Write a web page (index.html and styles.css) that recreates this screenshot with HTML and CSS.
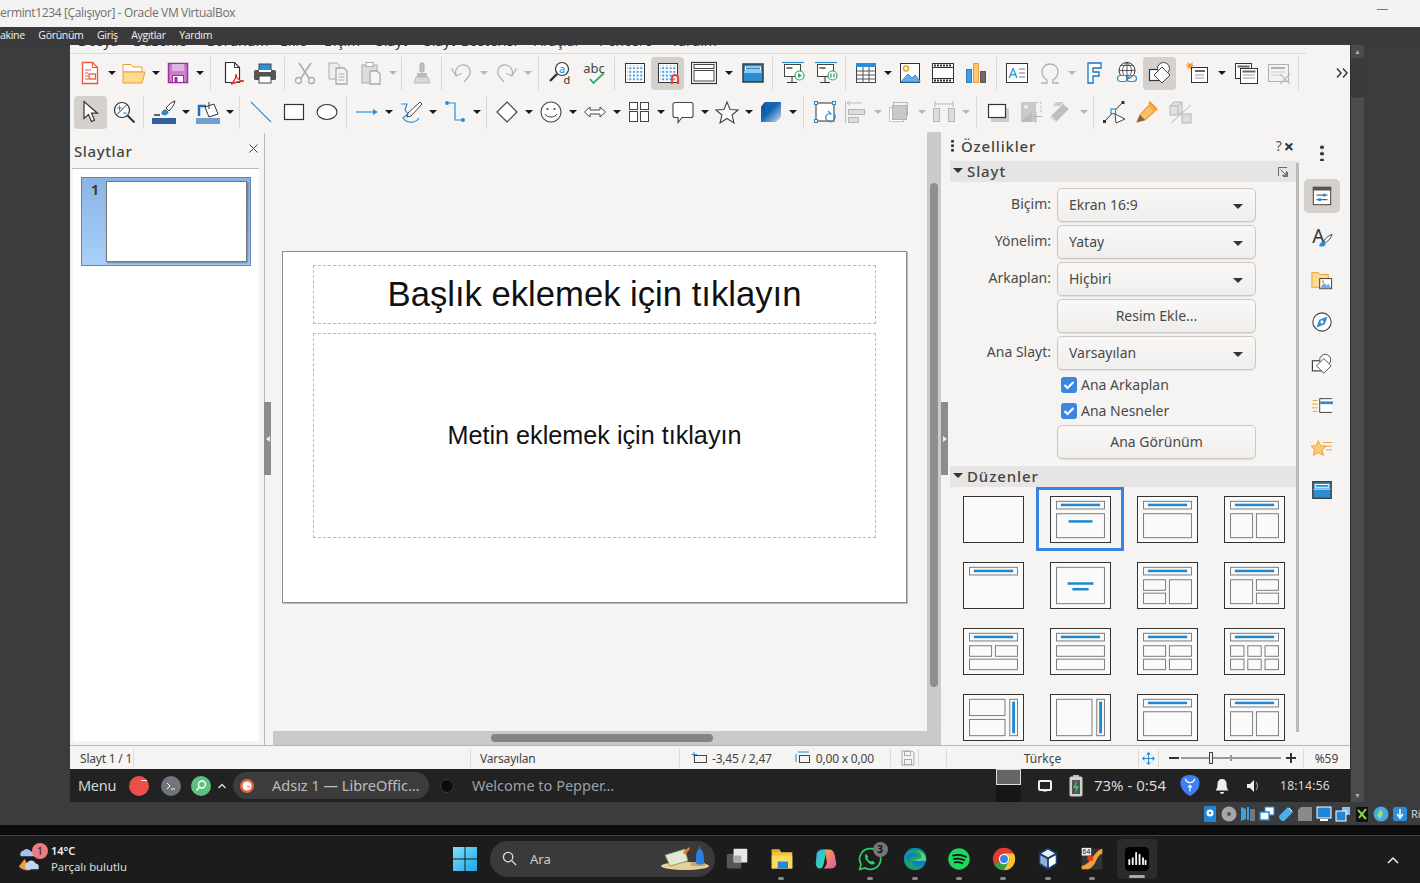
FILE: index.html
```html
<!DOCTYPE html>
<html lang="tr">
<head>
<meta charset="utf-8">
<title>VirtualBox - LibreOffice Impress</title>
<link rel="stylesheet" href="styles.css">
</head>
<body>
<svg class="defs" xmlns="http://www.w3.org/2000/svg">
<symbol id="new" viewBox="0 0 24 24"><path d="M4.500 1.500h10l5 5v16h-15z" fill="#fff" stroke="#e9573a" stroke-width="1.300"/><path d="M14.500 1.500v5h5" fill="none" stroke="#e9573a"/><path d="M7 9h6M7 12h3M7 15h3M7 18h3" stroke="#e9573a"/><rect x="11" y="13" width="6.500" height="5" fill="#fff" stroke="#e9573a" stroke-width="1.300"/></symbol>
<symbol id="open" viewBox="0 0 24 24"><path d="M1 3.500h8l2 2.500h9v5H1z" fill="#fff" stroke="#f29a33"/><path d="M1 22V11h22l-3 11z" fill="#fbdb8e" stroke="#f29a33"/></symbol>
<symbol id="save" viewBox="0 0 24 24"><rect x="2.500" y="2.500" width="19" height="19" fill="#cc7fcc" stroke="#9e2f9e" stroke-width="1.500"/><rect x="6" y="3" width="12" height="7" fill="#e0b4e0"/><rect x="6.500" y="14.500" width="11" height="7" fill="#fff" stroke="#9e2f9e"/><rect x="8.500" y="16" width="3" height="5" fill="#9e2f9e"/></symbol>
<symbol id="pdf" viewBox="0 0 24 24"><path d="M5.500 1.500h9l5 5v15h-14z" fill="#fff" stroke="#333" stroke-width="1.200"/><path d="M14.500 1.500v5h5" fill="none" stroke="#333"/><path d="M11 23c3-2 5-6 5-10 0 4 3 7 8 7-4 0-8 1-13 3z" fill="#fff" stroke="#e0302a" stroke-width="1.400"/></symbol>
<symbol id="print" viewBox="0 0 24 24"><rect x="6" y="3" width="12" height="8" fill="#2f8fd6" stroke="#444"/><rect x="1" y="9" width="22" height="10" rx="1.500" fill="#555"/><rect x="6" y="15" width="12" height="7" fill="#fff" stroke="#444"/><rect x="6" y="9" width="12" height="2" fill="#fff"/></symbol>
<symbol id="cut" viewBox="0 0 24 24"><path d="M6 2l10 15M18 2L8 17" stroke="#aaa" stroke-width="1.500" fill="none"/><circle cx="5.500" cy="19.500" r="3" fill="none" stroke="#aaa" stroke-width="1.300"/><circle cx="18.500" cy="19.500" r="3" fill="none" stroke="#aaa" stroke-width="1.300"/></symbol>
<symbol id="copy" viewBox="0 0 24 24"><path d="M3 2h8l3 3v13H3z" fill="#eee" stroke="#aaa"/><path d="M10 7h8l3 3v13H10z" fill="#f4f4f4" stroke="#aaa" stroke-width="1.300"/><path d="M12.500 13h6M12.500 16h6M12.500 19h6" stroke="#aaa"/></symbol>
<symbol id="paste" viewBox="0 0 24 24"><rect x="3" y="4" width="15" height="18" fill="#ddd" stroke="#aaa"/><rect x="7" y="1.500" width="7" height="4" fill="#fff" stroke="#aaa"/><path d="M11 10h7l3 3v10H11z" fill="#f6f6f6" stroke="#aaa" stroke-width="1.300"/></symbol>
<symbol id="clone" viewBox="0 0 24 24"><rect x="10" y="2" width="4" height="9" rx="1.500" fill="#c2c2c2" stroke="#aaa"/><path d="M7 12h10v4H7z" fill="#bbb"/><path d="M6 16h12l2 6H4z" fill="#d8d8d8" stroke="#bbb"/></symbol>
<symbol id="undo" viewBox="0 0 24 24"><path d="M6 14C4 8 9 3.500 14 4c5 .5 8 6 5 11l-5 6" fill="none" stroke="#b4b4b4" stroke-width="1.300"/><path d="M1.500 7.500L6 15l5.500-2.500" fill="none" stroke="#b4b4b4" stroke-width="1.300"/></symbol>
<symbol id="redo" viewBox="0 0 24 24"><path d="M18 14C20 8 15 3.500 10 4 5 4.500 2 10 5 15l5 6" fill="none" stroke="#b4b4b4" stroke-width="1.300"/><path d="M22.500 7.500L18 15l-5.500-2.500" fill="none" stroke="#b4b4b4" stroke-width="1.300"/></symbol>
<pattern id="dots" x="2.500" y="2.500" width="3.700" height="3.700" patternUnits="userSpaceOnUse"><rect width="2" height="2" fill="#3f9de0"/></pattern>
<symbol id="grid" viewBox="0 0 24 24"><rect x="2.500" y="2.500" width="19" height="19" fill="#fff" stroke="#333"/><rect x="4" y="4" width="17" height="17" fill="url(#dots)"/></symbol>
<symbol id="snap" viewBox="0 0 24 24"><rect x="2.500" y="2.500" width="19" height="19" fill="#fff" stroke="#333"/><rect x="4" y="4" width="17" height="17" fill="url(#dots)"/><path d="M16 23v-6a3 3 0 0 1 6 0v6" fill="none" stroke="#f04438" stroke-width="2.200"/></symbol>
<symbol id="view" viewBox="0 0 26 24"><rect x=".5" y="1.500" width="25" height="21" fill="#fff" stroke="#333" stroke-width="1.200"/><rect x="3" y="3.500" width="20" height="4" fill="#fff" stroke="#444"/><rect x="3" y="9.500" width="20" height="10.500" fill="#fff" stroke="#444"/></symbol>
<symbol id="master" viewBox="0 0 24 24"><rect x="2" y="3" width="20" height="18" fill="#2a8ed4" stroke="#3a3a3a" stroke-width="1.500"/><rect x="4.500" y="6" width="15" height="3" fill="#2a8ed4" stroke="#fff"/><path d="M3 11h18" stroke="#fff"/></symbol>
<symbol id="pres1" viewBox="0 0 24 24"><path d="M1 1.500h22" stroke="#2a8ed4" stroke-width="1.200"/><rect x="3.500" y="3.500" width="16" height="12" fill="#fff" stroke="#444"/><path d="M11 16v5M6 21.500h10" stroke="#333"/><rect x="5.500" y="6" width="6" height="2" fill="#777"/><circle cx="18.500" cy="14.500" r="4.500" fill="#fff" stroke="#2aae62" stroke-width="1.200"/><path d="M17 12v5l4-2.500z" fill="#2aae62"/></symbol>
<symbol id="pres2" viewBox="0 0 24 24"><path d="M1 1.500h22" stroke="#2a8ed4" stroke-width="1.200"/><rect x="3.500" y="3.500" width="16" height="12" fill="#fff" stroke="#444"/><path d="M11 16v5M6 21.500h10" stroke="#333"/><rect x="5.500" y="6" width="6" height="2" fill="#777"/><circle cx="18.500" cy="14.500" r="4.500" fill="#fff" stroke="#2aae62" stroke-width="1.200"/><path d="M17 12.500v4M20 12.500v4" stroke="#2aae62" stroke-width="1.300"/></symbol>
<symbol id="table" viewBox="0 0 24 24"><rect x="2.500" y="2.500" width="19" height="19" fill="#fff" stroke="#444"/><rect x="2" y="2" width="20" height="4" fill="#2a8ed4"/><path d="M2.500 10h19M2.500 14h19M2.500 18h19M9 6v16M15 6v16" stroke="#555"/></symbol>
<symbol id="image" viewBox="0 0 24 24"><rect x="2.500" y="2.500" width="19" height="19" fill="#fff" stroke="#333"/><circle cx="8" cy="7.500" r="2.500" fill="#fff" stroke="#f29a33" stroke-width="1.500"/><path d="M3 21l7-8 4 4 3-3 5 6v1H3z" fill="#6aaeea" stroke="#2a8ed4"/></symbol>
<symbol id="video" viewBox="0 0 24 24"><rect x="1.500" y="2.500" width="21" height="19" fill="#fff" stroke="#333"/><path d="M2 6.500h20M2 17.500h20" stroke="#333"/><path d="M3 4.500h18M3 19.500h18" stroke="#333" stroke-width="2" stroke-dasharray="2 1"/></symbol>
<symbol id="chart" viewBox="0 0 24 24"><rect x="2.500" y="8.500" width="5" height="13" fill="#3f9de0" stroke="#2a7ec0"/><rect x="9.500" y="2.500" width="5" height="19" fill="#f8c97a" stroke="#f29a33"/><rect x="16.500" y="10.500" width="5" height="11" fill="#6b6b6b" stroke="#555"/></symbol>
<symbol id="omega" viewBox="0 0 24 24"><path d="M3 22h6v-3c-3-2-5-5-5-8 0-5 3.500-8 8-8s8 3 8 8c0 3-2 6-5 8v3h6" fill="none" stroke="#b0b0b0" stroke-width="1.300"/></symbol>
<symbol id="fontwork" viewBox="0 0 24 24"><path d="M6 2h13v5h-8v4h6v4h-6v7H6z" fill="#fff" stroke="#1873c4" stroke-width="1.300"/></symbol>
<symbol id="link" viewBox="0 0 24 24"><circle cx="12" cy="9.500" r="8" fill="#fff" stroke="#333"/><path d="M4 9.500h16M12 1.500v16M6 4.500h12M6 14.500h12M12 1.500c-6 5-6 11 0 16M12 1.500c6 5 6 11 0 16" fill="none" stroke="#333" stroke-width=".8"/><rect x="2.500" y="14.500" width="10" height="6" rx="3" fill="#fff" stroke="#2a8ed4" stroke-width="1.200"/><rect x="11.500" y="14.500" width="10" height="6" rx="3" fill="none" stroke="#2a8ed4" stroke-width="1.200"/></symbol>
<symbol id="shapes" viewBox="0 0 24 24"><rect x="1.500" y="8.500" width="13" height="11" fill="#fff" stroke="#333" stroke-width="1.200"/><circle cx="15.500" cy="7.500" r="6" fill="#fff" stroke="#444"/><path d="M14 6l8 8-8 8-8-8z" fill="#fff" stroke="#444"/></symbol>
<symbol id="note" viewBox="0 0 24 24"><path d="M3 1l1.500 3L1 3l3 2-3 1.500 3.500-.5L3 9l3-2.500L7 10V6.500l3 1.500-2-3 3-.5-3-1 1-2.500L6.500 3z" fill="#f29a33"/><rect x="7.500" y="6.500" width="16" height="15" fill="#fff" stroke="#333"/><rect x="11" y="9" width="10" height="2" fill="#666"/><path d="M11 14h9M11 17h9" stroke="#999"/></symbol>
<symbol id="dup" viewBox="0 0 24 24"><rect x="1.500" y="2.500" width="16" height="15" fill="#fff" stroke="#333"/><rect x="3.500" y="4.500" width="12" height="2" fill="#666"/><rect x="6.500" y="7.500" width="17" height="15" fill="#fff" stroke="#333"/><rect x="8.500" y="9.500" width="13" height="2" fill="#666"/><path d="M9 14h12M9 17h12" stroke="#999"/></symbol>
<symbol id="del" viewBox="0 0 24 24"><rect x="1.500" y="3.500" width="20" height="17" fill="#f2f2f2" stroke="#b0b0b0"/><rect x="4" y="6" width="14" height="2" fill="#b0b0b0"/><path d="M4 11h14M4 14h10" stroke="#ccc"/><path d="M13 13l10 10M23 13L13 23" stroke="#bbb" stroke-width="1.300"/></symbol>
<symbol id="select" viewBox="0 0 24 24"><path d="M5 1.500v17l4.500-4 3 7 3-1.300-3-7h6z" fill="#fff" stroke="#333" stroke-width="1.200"/></symbol>
<symbol id="zoom" viewBox="0 0 24 24"><circle cx="10" cy="10" r="7.500" fill="#fff" stroke="#333" stroke-width="1.200"/><path d="M15.500 15.500l7 7" stroke="#333" stroke-width="2"/><path d="M5 14.500l10-10" stroke="#333"/><path d="M5 8h5M7.500 5.500v5" stroke="#2a8ed4"/><path d="M11 13h4" stroke="#2a8ed4"/></symbol>
<symbol id="linecol" viewBox="0 0 24 24"><rect x="0" y="18" width="24" height="6" fill="#335f9c"/><path d="M23 1c-3 1-6 3-9 7l3 3c3-3 5-6 6-10z" fill="#fff" stroke="#333"/><path d="M10 14c0-3 2-4.500 4-4l2 2c0 2-2 4-6 2z" fill="#2a8ed4" stroke="#2a6ea8"/><path d="M2 15h6" stroke="#333" stroke-width="1.500"/></symbol>
<symbol id="fillcol" viewBox="0 0 24 24"><rect x="0" y="18" width="24" height="6" fill="#729fcf"/><path d="M3 16V6h7" fill="none" stroke="#1d6fb8" stroke-width="2.500"/><path d="M9 7l9-3 4 10-9 3z" fill="#fff" stroke="#333"/><path d="M13 2v7" stroke="#333"/></symbol>
<symbol id="line" viewBox="0 0 24 24"><path d="M2 2l20 20" stroke="#2a8ed4" stroke-width="1.100"/></symbol>
<symbol id="rect" viewBox="0 0 24 24"><rect x="2.500" y="4.500" width="19" height="15" fill="#fff" stroke="#333" stroke-width="1.200"/></symbol>
<symbol id="ellipse" viewBox="0 0 24 24"><ellipse cx="12" cy="12" rx="10" ry="7.500" fill="#fff" stroke="#333" stroke-width="1.100"/></symbol>
<symbol id="arrowl" viewBox="0 0 24 24"><path d="M1 12h18" stroke="#2a8ed4" stroke-width="1.200"/><path d="M23 12l-5-3v6z" fill="#2a8ed4"/></symbol>
<symbol id="curve" viewBox="0 0 24 24"><path d="M2 4h6l-2 6 3 4-5 4c3 5 12 6 16 0" fill="none" stroke="#2a8ed4" stroke-width="1.200"/><path d="M21 2l2 2-11 12-4 1 1-4z" fill="#fff" stroke="#444"/></symbol>
<symbol id="connector" viewBox="0 0 24 24"><path d="M4 3h8v17h9" fill="none" stroke="#2a8ed4" stroke-width="1.200"/><circle cx="4" cy="3" r="2" fill="#2a8ed4"/><circle cx="20" cy="20" r="2" fill="#2a8ed4"/></symbol>
<symbol id="diamond" viewBox="0 0 24 24"><path d="M12 2l10 10-10 10L2 12z" fill="#fff" stroke="#444" stroke-width="1.200"/></symbol>
<symbol id="smiley" viewBox="0 0 24 24"><circle cx="12" cy="12" r="10" fill="#fff" stroke="#444" stroke-width="1.100"/><circle cx="8.500" cy="9" r="1.100" fill="#444"/><circle cx="15.500" cy="9" r="1.100" fill="#444"/><path d="M6 14c2 4 10 4 12 0" fill="none" stroke="#444"/></symbol>
<symbol id="dbl" viewBox="0 0 24 24"><path d="M1.500 12L7 7v3h10V7l5.500 5-5.500 5v-3H7v3z" fill="#fff" stroke="#444"/></symbol>
<symbol id="flow" viewBox="0 0 24 24"><rect x="2.500" y="2.500" width="8" height="7" fill="#fff" stroke="#444"/><rect x="13.500" y="2.500" width="8" height="7" fill="#fff" stroke="#444"/><rect x="2.500" y="11.500" width="8" height="10" fill="#fff" stroke="#444"/><rect x="13.500" y="11.500" width="8" height="10" fill="#fff" stroke="#444"/></symbol>
<symbol id="callout" viewBox="0 0 24 24"><path d="M4 2.500h16a2 2 0 0 1 2 2v11a2 2 0 0 1-2 2H11l-4 5v-5H4a2 2 0 0 1-2-2v-11a2 2 0 0 1 2-2z" fill="#fff" stroke="#444" stroke-width="1.100"/></symbol>
<symbol id="star" viewBox="0 0 24 24"><path d="M12 2l3 7.500 8 .5-6 5 2 8-7-4.500L5 23l2-8-6-5 8-.5z" fill="#fff" stroke="#444" stroke-width="1.100"/></symbol>
<linearGradient id="cubeg" x1="0" y1="0" x2="1" y2="1"><stop offset=".45" stop-color="#1564b4"/><stop offset="1" stop-color="#cfe0f2"/></linearGradient>
<symbol id="cube" viewBox="0 0 24 24"><path d="M6 2h16v15l-5 5H2V7z" fill="url(#cubeg)"/><path d="M2 7l4-5v15z" fill="#0f56a0"/></symbol>
<symbol id="rotate" viewBox="0 0 24 24"><rect x="3" y="3" width="18" height="18" fill="#fff" stroke="#333"/><g fill="#fff" stroke="#2a8ed4" stroke-width="1.100"><rect x="1.500" y="1.500" width="3" height="3"/><rect x="19.500" y="1.500" width="3" height="3"/><rect x="1.500" y="19.500" width="3" height="3"/></g><path d="M15 11l3 3h-2c-2 0-4 2-3 5 1 3 6 4 8 1 2-3 1-5 0-6" fill="none" stroke="#2a8ed4" stroke-width="1.200"/></symbol>
<symbol id="align" viewBox="0 0 24 24"><path d="M1.500 1v22" stroke="#bbb"/><path d="M3 3h15M3 3l3-2M3 3l3 2" stroke="#bbb" fill="none"/><rect x="4.500" y="9.500" width="16" height="5" fill="#ddd" stroke="#b5b5b5"/><rect x="4.500" y="17.500" width="10" height="5" fill="#ddd" stroke="#b5b5b5"/></symbol>
<symbol id="arrange" viewBox="0 0 24 24"><path d="M5.500 6.500v-4h14v13h-4" fill="none" stroke="#b5b5b5"/><rect x="1.500" y="7.500" width="14" height="14" fill="#fff" stroke="#c5c5c5"/><rect x="4.500" y="5.500" width="14" height="14" fill="#c9c9c9" stroke="#b5b5b5"/></symbol>
<symbol id="distrib" viewBox="0 0 24 24"><path d="M3 1v6M21 1v6M4 4h16" stroke="#b5b5b5" fill="none"/><rect x="1.500" y="8.500" width="6" height="13" fill="#ddd" stroke="#b5b5b5"/><rect x="16.500" y="8.500" width="6" height="13" fill="#ddd" stroke="#b5b5b5"/></symbol>
<symbol id="shadow" viewBox="0 0 24 24"><rect x="5" y="8" width="18" height="14" fill="#ccc"/><rect x="2.500" y="4.500" width="17" height="13" fill="#fff" stroke="#333" stroke-width="1.200"/></symbol>
<symbol id="crop" viewBox="0 0 24 24"><rect x="2" y="2" width="15" height="20" fill="#c9c9c9"/><circle cx="7" cy="7" r="2" fill="#eee"/><path d="M3 20l10-8v10H3z" fill="#bbb"/><path d="M17 2.500h5v10" fill="none" stroke="#bbb" stroke-dasharray="2.500 1.500"/><path d="M12 16.500h11M17 12v11" stroke="#bbb"/></symbol>
<symbol id="filter" viewBox="0 0 24 24"><path d="M2 17l13-13 6 5L8 22z" fill="#bfbfbf"/><path d="M8 2h8l-4 4H5z" fill="#ccc"/><path d="M3 16l5 5" stroke="#eee"/></symbol>
<symbol id="points" viewBox="0 0 24 24"><path d="M2 22L21 2" stroke="#333"/><rect x="9" y="9" width="4.500" height="4.500" fill="#fff" stroke="#2a8ed4" stroke-width="1.200"/><rect x="1" y="20" width="3" height="3" fill="#333"/><rect x="19.500" y="1" width="3" height="3" fill="#333"/><path d="M13 14l10 5-9 4z" fill="#fff" stroke="#444"/></symbol>
<symbol id="glue" viewBox="0 0 24 24"><path d="M2 22l3-7 9-10 6 6-10 9z" fill="#f6bf6c" stroke="#f29a33" stroke-width="1.200"/><path d="M14 2l8 8" stroke="#f29a33" stroke-width="2.500"/><path d="M2 22l3-7 5 5z" fill="#666"/></symbol>
<symbol id="td" viewBox="0 0 24 24"><path d="M2 6l4-4h8v10l-4 3H2z" fill="#e2e2e2" stroke="#b5b5b5"/><path d="M2 6h8v9M10 6l4-4" fill="none" stroke="#b5b5b5"/><path d="M3 23L23 5" stroke="#b5b5b5"/><rect x="14" y="14" width="9" height="9" fill="#ddd" stroke="#b5b5b5"/></symbol>
<symbol id="tabprop" viewBox="0 0 24 24"><rect x="2.500" y="2.500" width="19" height="19" fill="#fff" stroke="#333"/><rect x="2" y="2" width="20" height="4" fill="#555"/><path d="M6 11h12M6 16h12" stroke="#333"/><rect x="13" y="9.500" width="3" height="3" fill="#2a8ed4"/><rect x="8" y="14.500" width="3" height="3" fill="#2a8ed4"/></symbol>
<symbol id="tabgal" viewBox="0 0 24 24"><path d="M1 4h7l2 2h9v14H1z" fill="#fbdb8e" stroke="#f29a33"/><rect x="9.500" y="10.500" width="13" height="11" fill="#fff" stroke="#333"/><path d="M10 21l4-6 3 3 2-2 3 5z" fill="#6aaeea"/><circle cx="13" cy="13.500" r="1.300" fill="#f29a33"/></symbol>
<symbol id="tabnav" viewBox="0 0 24 24"><circle cx="12" cy="12" r="10" fill="#fff" stroke="#444" stroke-width="1.200"/><path d="M18 6l-9 3.500L6 18l9-3.500z" fill="#2a8ed4"/><circle cx="12" cy="12" r="1.800" fill="#fff"/></symbol>
<symbol id="tabanim" viewBox="0 0 24 24"><path d="M23 4H9.500v15H23" fill="#fff" stroke="#333"/><rect x="10" y="7" width="14" height="3" fill="#2a8ed4"/><path d="M2 6h5M1 10h6M1 14h6M2 18h5" stroke="#f29a33"/></symbol>
<symbol id="tabtrans" viewBox="0 0 24 24"><path d="M8 4l2.500 5.500 6 .5-4.500 4 1.500 6L8 17l-5.500 3L4 14 0 10l5.500-.5z" fill="#fbcb6c" stroke="#f29a33"/><path d="M13 6h10M15 10h8M16 14h7" stroke="#f29a33"/></symbol>
<symbol id="lt" viewBox="0 0 61 47"><rect x="5.500" y="4.500" width="50" height="8" fill="none" stroke="#777"/><rect x="10" y="7" width="41" height="2.600" fill="#2088d0"/></symbol>
<symbol id="wcloud" viewBox="0 0 28 28"><path d="M1 23l6-8 7 12c-5 1-11 0-13-4z" fill="#ee9a3a"/><path d="M3 12a4 4 0 0 1 3-6 5 5 0 0 1 8 1c3 0 4 3 3 5z" fill="#9cc4ee"/><path d="M9 26a4 4 0 0 1 1-7 5 5 0 0 1 9 1c3 0 4 3 3 6z" fill="#bcd8f4"/></symbol>
<symbol id="edge" viewBox="0 0 28 28"><circle cx="14" cy="14" r="13" fill="#0f7bd0"/><path d="M2 14C3 5 12 0 20 3c6 2 8 8 7 13H11c0 5 7 9 14 5-3 4-8 6-12 5C6 25 1 20 2 14z" fill="#19a36a"/><path d="M4 10c3-4 10-4 13 1l-7 0c-2 1-3 4-2 7-2-2-4-5-4-8z" fill="#0f7bd0"/><path d="M11 16h16c0-8-6-12-12-11 7 1 7 6 6 8z" fill="#5cd08a"/></symbol>
<symbol id="chrome" viewBox="0 0 28 28"><circle cx="14" cy="14" r="13" fill="#e33b2e"/><path d="M14 14L2.800 20.500A13 13 0 0 0 14 27l7-13z" fill="#2fa24f"/><path d="M14 14l7 0-7 13a13 13 0 0 0 13-13 13 13 0 0 0-1.700-6.500H14z" fill="#f9c531"/><circle cx="14" cy="14" r="6" fill="#fff"/><circle cx="14" cy="14" r="4.600" fill="#3b82e8"/></symbol>
</svg>

<header class="titlebar"><span class="titletext">ermint1234 [Çalışıyor] - Oracle VM VirtualBox</span><span class="minbtn"></span></header>
<nav class="vbmenu"><span class="vbm-first">akine</span><span>Görünüm</span><span>Giriş</span><span>Aygıtlar</span><span>Yardım</span></nav>

<div class="vm">
  <div class="guestrow">
    <div class="guest">
      <main class="lo">
        <div class="lomenu"><span class="m1">Dosya</span><span class="m2">Düzenle</span><span class="m3">Görünüm</span><span class="m4">Ekle</span><span class="m5">Biçim</span><span class="m6">Slayt</span><span class="m7">Slayt Gösterisi</span><span class="m8">Araçlar</span><span class="m9">Pencere</span><span class="m10">Yardım</span></div>
        <div class="tb tb1">
          <span class="b"><svg><use href="#new"/></svg></span><i class="a"></i>
          <span class="b"><svg><use href="#open"/></svg></span><i class="a"></i>
          <span class="b"><svg><use href="#save"/></svg></span><i class="a"></i><em class="s s10"></em>
          <span class="b"><svg><use href="#pdf"/></svg></span>
          <span class="b"><svg><use href="#print"/></svg></span><em class="s s7"></em>
          <span class="b"><svg><use href="#cut"/></svg></span>
          <span class="b"><svg><use href="#copy"/></svg></span>
          <span class="b"><svg><use href="#paste"/></svg></span><i class="a d"></i><em class="s s7"></em>
          <span class="b"><svg><use href="#clone"/></svg></span><em class="s s7"></em>
          <span class="b"><svg><use href="#undo"/></svg></span><i class="a d"></i>
          <span class="b"><svg><use href="#redo"/></svg></span><i class="a d"></i><em class="s s11"></em>
          <span class="b"><svg viewBox="0 0 24 24"><circle cx="13" cy="8" r="6.500" fill="#fff" stroke="#333" stroke-width="1.200"/><path d="M8 13l-7 7" stroke="#333" stroke-width="2.400"/><text x="13" y="11.500" text-anchor="middle" class="svgt" font-size="11" fill="#2b8fd8">a</text><text x="18" y="22.500" text-anchor="middle" class="svgt" font-size="11" fill="#333">d</text></svg></span>
          <span class="b"><svg viewBox="0 0 24 24"><text x="12" y="12" text-anchor="middle" class="svgt" font-size="13" fill="#444">abc</text><path d="M8 18l3.500 4L22 12" fill="none" stroke="#2aae62" stroke-width="1.800"/></svg></span><em class="s s8"></em>
          <span class="b"><svg><use href="#grid"/></svg></span>
          <span class="b on"><svg><use href="#snap"/></svg></span>
          <span class="b bview"><svg class="w26"><use href="#view"/></svg></span><i class="a amr"></i>
          <span class="b"><svg><use href="#master"/></svg></span><em class="s s7"></em>
          <span class="b"><svg><use href="#pres1"/></svg></span>
          <span class="b"><svg><use href="#pres2"/></svg></span><em class="s s7"></em>
          <span class="b"><svg><use href="#table"/></svg></span><i class="a"></i>
          <span class="b"><svg><use href="#image"/></svg></span>
          <span class="b"><svg><use href="#video"/></svg></span>
          <span class="b"><svg><use href="#chart"/></svg></span><em class="s s8"></em>
          <span class="b"><svg viewBox="0 0 24 24"><rect x="1.500" y="2.500" width="21" height="19" fill="#fff" stroke="#333"/><text x="8" y="17" text-anchor="middle" class="svgt" font-size="14" fill="#2a8ed4">A</text><path d="M14 8h6M14 12h6M14 16h6" stroke="#777"/></svg></span>
          <span class="b"><svg><use href="#omega"/></svg></span><i class="a d"></i>
          <span class="b"><svg><use href="#fontwork"/></svg></span>
          <span class="b"><svg><use href="#link"/></svg></span>
          <span class="b on"><svg><use href="#shapes"/></svg></span>
          <span class="b bnote"><svg><use href="#note"/></svg></span><i class="a amr"></i>
          <span class="b"><svg><use href="#dup"/></svg></span>
          <span class="b"><svg><use href="#del"/></svg></span><em class="s s7"></em>
          <svg class="more" viewBox="0 0 12 10"><path d="M1 .5L5 5 1 9.500M7 .5L11 5 7 9.500" fill="none" stroke="#333" stroke-width="1.400"/></svg>
        </div>
        <div class="tb tb2">
          <span class="b on"><svg><use href="#select"/></svg></span>
          <span class="b"><svg><use href="#zoom"/></svg></span><em class="s s7"></em>
          <span class="b"><svg><use href="#linecol"/></svg></span><i class="a"></i>
          <span class="b"><svg><use href="#fillcol"/></svg></span><i class="a"></i><em class="s s9"></em>
          <span class="b"><svg><use href="#line"/></svg></span>
          <span class="b"><svg><use href="#rect"/></svg></span>
          <span class="b"><svg><use href="#ellipse"/></svg></span><em class="s s7"></em>
          <span class="b"><svg><use href="#arrowl"/></svg></span><i class="a"></i>
          <span class="b"><svg><use href="#curve"/></svg></span><i class="a"></i>
          <span class="b"><svg><use href="#connector"/></svg></span><i class="a"></i><em class="s s8"></em>
          <span class="b"><svg><use href="#diamond"/></svg></span><i class="a"></i>
          <span class="b"><svg><use href="#smiley"/></svg></span><i class="a"></i>
          <span class="b"><svg><use href="#dbl"/></svg></span><i class="a"></i>
          <span class="b"><svg><use href="#flow"/></svg></span><i class="a"></i>
          <span class="b"><svg><use href="#callout"/></svg></span><i class="a"></i>
          <span class="b"><svg><use href="#star"/></svg></span><i class="a"></i>
          <span class="b"><svg><use href="#cube"/></svg></span><i class="a"></i><em class="s s10"></em>
          <span class="b"><svg><use href="#rotate"/></svg></span>
          <span class="b balign"><svg><use href="#align"/></svg></span><i class="a d"></i>
          <span class="b"><svg><use href="#arrange"/></svg></span><i class="a d"></i>
          <span class="b"><svg><use href="#distrib"/></svg></span><i class="a d"></i><em class="s s10"></em>
          <span class="b"><svg><use href="#shadow"/></svg></span>
          <span class="b"><svg><use href="#crop"/></svg></span>
          <span class="b bfilter"><svg><use href="#filter"/></svg></span><i class="a d aml"></i><em class="s s8"></em>
          <span class="b"><svg><use href="#points"/></svg></span>
          <span class="b"><svg><use href="#glue"/></svg></span>
          <span class="b"><svg><use href="#td"/></svg></span>
        </div>

        <div class="work">
          <aside class="slides">
            <div class="slides-head"><span>Slaytlar</span><svg class="slides-x" viewBox="0 0 9 9"><path d="M.5.500l8 8M8.500.500l-8 8" stroke="#444"/></svg></div>
            <div class="slides-list">
              <div class="slide-item"><span class="slide-no">1</span><div class="slide-thumb"></div></div>
            </div>
            <span class="grip grip-l"><b class="gl"></b></span>
          </aside>
          <section class="center">
            <div class="canvas-row">
              <div class="canvas">
                <div class="slide">
                  <div class="ph ph-title">Başlık eklemek için tıklayın</div>
                  <div class="ph ph-body">Metin eklemek için tıklayın</div>
                </div>
              </div>
              <div class="vscroll"><div class="vthumb"></div></div>
            </div>
            <div class="hscroll-row"><div class="hscroll"><div class="hthumb"></div></div></div>
          </section>
          <aside class="side">
            <span class="grip grip-r"><b class="gr"></b></span>
            <div class="deck">
              <div class="deck-head"><span class="deck-dots"></span><span class="deck-title">Özellikler</span><span class="deck-q">?</span><span class="deck-x">×</span></div>
              <div class="sec-head"><i class="sec-caret"></i><span>Slayt</span><svg class="sec-more" viewBox="0 0 12 12"><path d="M.5 11V.5H11" fill="none" stroke="#444"/><path d="M3 3l7 7M10 5v5H5M11.500 6v5.500H6" fill="none" stroke="#444"/></svg></div>
              <div class="form">
                <label>Biçim:</label><div class="sel-box">Ekran 16:9<i></i></div>
                <label>Yönelim:</label><div class="sel-box">Yatay<i></i></div>
                <label>Arkaplan:</label><div class="sel-box">Hiçbiri<i></i></div>
                <span></span><div class="btn">Resim Ekle...</div>
                <label>Ana Slayt:</label><div class="sel-box">Varsayılan<i></i></div>
                <span></span><div class="chk"><i><svg viewBox="0 0 16 16"><path d="M3.500 8l3 3 6-6" fill="none" stroke="#fff" stroke-width="2.200"/></svg></i>Ana Arkaplan</div>
                <span></span><div class="chk"><i><svg viewBox="0 0 16 16"><path d="M3.500 8l3 3 6-6" fill="none" stroke="#fff" stroke-width="2.200"/></svg></i>Ana Nesneler</div>
                <span></span><div class="btn">Ana Görünüm</div>
              </div>
              <div class="sec-head sec-2"><i class="sec-caret"></i><span>Düzenler</span></div>
              <div class="layouts">
                <svg viewBox="0 0 61 47"></svg>
                <span class="pick"><svg viewBox="0 0 61 47"><use href="#lt"/><rect x="5.500" y="17.500" width="50" height="25"/><path d="M18 25.500h25" class="bl"/></svg></span>
                <svg viewBox="0 0 61 47"><use href="#lt"/><rect x="5.500" y="17.500" width="50" height="25"/></svg>
                <svg viewBox="0 0 61 47"><use href="#lt"/><rect x="5.500" y="17.500" width="23" height="25"/><rect x="32.500" y="17.500" width="23" height="25"/></svg>
                <svg viewBox="0 0 61 47"><use href="#lt"/></svg>
                <svg viewBox="0 0 61 47"><rect x="5.500" y="4.500" width="50" height="38"/><path d="M17 21.500h27M22 27.500h17" class="bl"/></svg>
                <svg viewBox="0 0 61 47"><use href="#lt"/><rect x="5.500" y="17.500" width="23" height="11"/><rect x="5.500" y="31.500" width="23" height="11"/><rect x="32.500" y="17.500" width="23" height="25"/></svg>
                <svg viewBox="0 0 61 47"><use href="#lt"/><rect x="5.500" y="17.500" width="23" height="25"/><rect x="32.500" y="17.500" width="23" height="11"/><rect x="32.500" y="31.500" width="23" height="11"/></svg>
                <svg viewBox="0 0 61 47"><use href="#lt"/><rect x="5.500" y="17.500" width="23" height="11"/><rect x="32.500" y="17.500" width="23" height="11"/><rect x="5.500" y="31.500" width="50" height="11"/></svg>
                <svg viewBox="0 0 61 47"><use href="#lt"/><rect x="5.500" y="17.500" width="50" height="11"/><rect x="5.500" y="31.500" width="50" height="11"/></svg>
                <svg viewBox="0 0 61 47"><use href="#lt"/><rect x="5.500" y="17.500" width="23" height="11"/><rect x="32.500" y="17.500" width="23" height="11"/><rect x="5.500" y="31.500" width="23" height="11"/><rect x="32.500" y="31.500" width="23" height="11"/></svg>
                <svg viewBox="0 0 61 47"><use href="#lt"/><rect x="5.500" y="17.500" width="14" height="11"/><rect x="23.500" y="17.500" width="14" height="11"/><rect x="41.500" y="17.500" width="14" height="11"/><rect x="5.500" y="31.500" width="14" height="11"/><rect x="23.500" y="31.500" width="14" height="11"/><rect x="41.500" y="31.500" width="14" height="11"/></svg>
                <svg viewBox="0 0 61 47"><rect x="5.500" y="4.500" width="37" height="17"/><rect x="5.500" y="25.500" width="37" height="17"/><rect x="47.500" y="4.500" width="8" height="38"/><path d="M51.500 7v33" class="bl bl3"/></svg>
                <svg viewBox="0 0 61 47"><rect x="5.500" y="4.500" width="37" height="38"/><rect x="47.500" y="4.500" width="8" height="38"/><path d="M51.500 7v33" class="bl bl3"/></svg>
                <svg viewBox="0 0 61 47"><use href="#lt"/><rect x="5.500" y="17.500" width="50" height="25"/></svg>
                <svg viewBox="0 0 61 47"><use href="#lt"/><rect x="5.500" y="17.500" width="23" height="25"/><rect x="32.500" y="17.500" width="23" height="25"/></svg>
              </div>
              <div class="deck-scroll"></div>
            </div>
            <div class="tabs">
              <span class="tabs-dots"></span>
              <span class="t on"><svg><use href="#tabprop"/></svg></span>
              <span class="t"><svg viewBox="0 0 24 24"><text x="8" y="17" text-anchor="middle" class="svgt" font-size="21" fill="#333">A</text><path d="M23 8c-3 1-7 4-9 7l2 2c3-2 6-5 7-9z" fill="#fff" stroke="#333"/><path d="M9 21c0-4 3-5 5-5l2 2c0 3-3 4-7 3z" fill="#2a8ed4"/></svg></span>
              <span class="t"><svg><use href="#tabgal"/></svg></span>
              <span class="t"><svg><use href="#tabnav"/></svg></span>
              <span class="t"><svg><use href="#shapes"/></svg></span>
              <span class="t"><svg><use href="#tabanim"/></svg></span>
              <span class="t"><svg><use href="#tabtrans"/></svg></span>
              <span class="t"><svg><use href="#master"/></svg></span>
            </div>
          </aside>
        </div>

        <footer class="status">
          <span class="c c1">Slayt 1 / 1</span>
          <span class="c c2"></span>
          <span class="c c3">Varsayılan</span>
          <span class="c c4"><svg viewBox="0 0 16 14"><path d="M3 1v5M.5 3.500H6" stroke="#2a8ed4"/><rect x="3.500" y="4.500" width="12" height="7" fill="none" stroke="#444"/></svg>-3,45 / 2,47<svg class="ml" viewBox="0 0 16 14"><path d="M1 3v8M3 1h11" stroke="#2a8ed4"/><rect x="4.500" y="4.500" width="10" height="7" fill="none" stroke="#444"/></svg>0,00 x 0,00</span>
          <span class="c c5"><svg viewBox="0 0 14 16"><path d="M1 1h10l2 2v12H1z" fill="none" stroke="#aaa"/><rect x="3.500" y="1.500" width="6" height="4" fill="none" stroke="#aaa"/><rect x="3.500" y="9.500" width="7" height="5" fill="none" stroke="#aaa"/></svg></span>
          <span class="c c6"></span>
          <span class="c c7">Türkçe</span>
          <span class="c c8"><svg viewBox="0 0 16 16"><path d="M8 1v14M1 8h14" stroke="#2a8ed4" stroke-width="1.300"/><path d="M8 0l3 3H5zM8 16l3-3H5zM0 8l3-3v6zM16 8l-3-3v6z" fill="#2a8ed4"/></svg></span>
          <span class="c c9"><b class="z-m"></b><span class="z-track"><i class="z-tick"></i><i class="z-knob"></i></span><b class="z-p"></b></span>
          <span class="c c10">%59</span>
        </footer>
      </main>

      <div class="cin">
        <span class="cin-menu">Menu</span>
        <i class="ball red"></i>
        <svg class="ball-s ball-t" viewBox="0 0 20 20"><circle cx="10" cy="10" r="10" fill="#70757c"/><path d="M6 7l3 3-3 3M10 13h4" fill="none" stroke="#fff"/></svg>
        <svg class="ball-s ball-g" viewBox="0 0 20 20"><circle cx="10" cy="10" r="10" fill="#5dc27e"/><circle cx="11" cy="8.500" r="3.500" fill="none" stroke="#fff" stroke-width="1.400"/><path d="M8.500 11l-3 3.500" stroke="#fff" stroke-width="1.400"/></svg>
        <svg class="chev" viewBox="0 0 8 6"><path d="M.5 5L4 1.500 7.500 5" fill="none" stroke="#ddd" stroke-width="1.300"/></svg>
        <span class="pill"><svg class="pill-i" viewBox="0 0 14 14"><circle cx="7" cy="7" r="7" fill="#e8623a"/><circle cx="7" cy="7" r="4.500" fill="#fff"/><path d="M7 7l3 1" stroke="#e8623a"/></svg><span class="pill-t">Adsız 1 — LibreOffic…</span></span>
        <i class="darkdot"></i>
        <span class="cin-win">Welcome to Pepper…</span>
        <span class="cin-right">
          <span class="ws"><i></i></span>
          <svg class="mon" viewBox="0 0 14 12"><rect x="1" y="1" width="12" height="9" rx="1" fill="none" stroke="#eee" stroke-width="2"/><path d="M5 11h4" stroke="#eee"/></svg>
          <svg class="bat" viewBox="0 0 14 22"><rect x="4" y="0" width="6" height="2" fill="#bbb"/><rect x="1" y="2" width="12" height="19" rx="1" fill="#d2d2d2" stroke="#ccc"/><rect x="3" y="5" width="8" height="14" fill="#555"/><path d="M8 5L4 13h3l-1 6 4-8H7z" fill="#3fbf6f"/></svg>
          <span class="batt">73% - 0:54</span>
          <svg class="vpn" viewBox="0 0 20 22"><path d="M10 0c6 0 10 3 10 8 0 7-5 11-10 14C5 19 0 15 0 8c0-5 4-8 10-8z" fill="#3f7ff5"/><path d="M5 4c1 3 3 4 5 4s4-1 5-4M10 11v6M8 13l2-2 2 2" fill="none" stroke="#fff" stroke-width="1.300"/></svg>
          <svg class="bell" viewBox="0 0 14 16"><path d="M7 1c3 0 4.500 2 4.500 5s.5 5 2 6.500H.5C2 11 2.500 9 2.500 6S4 1 7 1z" fill="#eee"/><path d="M5 14h4a2 2 0 0 1-4 0z" fill="#eee"/></svg>
          <svg class="spk" viewBox="0 0 14 14"><path d="M1 5h3l4-4v12l-4-4H1z" fill="#eee"/><path d="M10 3c2 2 2 6 0 8" fill="none" stroke="#888" stroke-width="1.300"/></svg>
          <span class="clock">18:14:56</span>
        </span>
      </div>
    </div>
    <div class="vmscroll"><span class="vs-btn">▲</span><span class="vs-top"></span><span class="vs-thumb"></span><span class="vs-btn">▼</span></div>
  </div>
  <div class="vbstatus">
    <svg viewBox="0 0 12 16"><rect width="12" height="16" rx="1" fill="#1f86d8"/><circle cx="6" cy="7" r="3.500" fill="#fff"/><circle cx="6" cy="7" r="1.200" fill="#1f86d8"/></svg>
    <svg viewBox="0 0 16 16"><circle cx="8" cy="8" r="7.500" fill="#a7a7a7"/><circle cx="8" cy="8" r="2" fill="#555"/></svg>
    <svg viewBox="0 0 16 16"><path d="M1 1l5 2v10l-5 2z" fill="#3aa0e8"/><rect x="7" y="1" width="2" height="13" fill="#3aa0e8"/><path d="M10 3h5v12h-5z" fill="#777"/></svg>
    <svg viewBox="0 0 16 16"><rect x="6" y="1" width="9" height="8" fill="#fff" stroke="#1f86d8"/><rect x="1" y="6" width="9" height="8" fill="#fff" stroke="#1f86d8" stroke-width="1.500"/></svg>
    <svg viewBox="0 0 16 16"><path d="M10 1l5 5-9 9c-3 0-5-2-5-5z" fill="#4cb0ef"/><path d="M11 2l3 3" stroke="#fff"/></svg>
    <svg viewBox="0 0 16 16"><path d="M1 4l3-3h11v14H1z" fill="#8a8a8a"/></svg>
    <svg viewBox="0 0 16 16"><rect x="1" y="1" width="14" height="11" fill="#1f86d8" stroke="#fff"/><rect x="4" y="13" width="8" height="2" fill="#fff"/></svg>
    <svg viewBox="0 0 16 16"><rect x="7" y="1" width="8" height="8" fill="#90c0ea"/><rect x="1" y="5" width="10" height="10" fill="#1f86d8" stroke="#fff"/></svg>
    <svg viewBox="0 0 16 16"><rect x="2" y="1" width="12" height="15" fill="#111"/><path d="M4 4l8 9M12 3l-7 9" stroke="#8ad83f" stroke-width="2"/></svg>
    <svg viewBox="0 0 16 16"><circle cx="8" cy="8" r="7.500" fill="#48a8e6"/><path d="M4 9l4-6 2 5-3 5z" fill="#9be36b"/></svg>
    <svg viewBox="0 0 16 16"><rect x="1" y="1" width="14" height="14" rx="2" fill="#2a8ee0"/><path d="M8 3v7M5 8l3 4 3-4" fill="none" stroke="#fff" stroke-width="1.500"/></svg>
    <span class="rig">Rig</span>
  </div>
</div>
<div class="strip"></div>

<footer class="taskbar">
  <div class="weather">
    <svg class="w-ic"><use href="#wcloud"/></svg>
    <span class="w-badge">1</span>
    <div class="w-txt"><b>14°C</b><span>Parçalı bulutlu</span></div>
  </div>
  <svg class="winlogo" viewBox="0 0 24 24"><defs><linearGradient id="wg" x1="0" y1="0" x2="1" y2="1"><stop offset="0" stop-color="#7fe0fa"/><stop offset="1" stop-color="#1aa6e6"/></linearGradient></defs><path d="M0 0h11.500v11.500H0zM12.500 0H24v11.500H12.500zM0 12.500h11.500V24H0zM12.500 12.500H24V24H12.500z" fill="url(#wg)"/></svg>
  <div class="search">
    <svg viewBox="0 0 16 16"><circle cx="6.500" cy="6.500" r="5" fill="none" stroke="#ddd" stroke-width="1.400"/><path d="M10 10l5 5" stroke="#ddd" stroke-width="1.400"/></svg>
    <span>Ara</span>
    <svg class="s-art" viewBox="0 0 48 24"><ellipse cx="24" cy="20" rx="24" ry="4" fill="#e8cf9a"/><path d="M4 9l20-6 3 12-18 5z" fill="#dfe9d2" stroke="#7a8a5a" stroke-width=".8"/><path d="M22 6l6-5 1 2-5 6z" fill="#e07a3a"/><rect x="30" y="17" width="14" height="3" fill="#c9a46a"/><path d="M38 0c2 2 1 2 1 3 4 2 4 6 4 14 0 2-8 2-8 0 0-8 0-12 3-14z" fill="#2a7fe0"/></svg>
  </div>
  <div class="tasks">
    <span class="task"><svg viewBox="0 0 28 28"><rect x="2" y="8" width="17" height="17" fill="#555" rx="2"/><rect x="10" y="2" width="16" height="16" fill="#e8e8e8" rx="1"/><rect x="10" y="10" width="9" height="8" fill="#aaa"/></svg></span>
    <span class="task pin"><svg viewBox="0 0 28 28"><path d="M2 3h9l2 3h13v19H2z" fill="#f5c33b"/><path d="M2 3h9l2 3H2z" fill="#e0a72a"/><rect x="2" y="10" width="24" height="15" fill="#fbd95e"/><rect x="9" y="17" width="12" height="8" fill="#1f8ae0"/></svg></span>
    <span class="task"><svg viewBox="0 0 28 28"><defs><linearGradient id="cp1" x1="0" y1="0" x2="1" y2="1"><stop offset="0" stop-color="#2fb5f0"/><stop offset="1" stop-color="#3ddc97"/></linearGradient><linearGradient id="cp2" x1="0" y1="0" x2="1" y2="1"><stop offset="0" stop-color="#f6a93b"/><stop offset="1" stop-color="#e94fb8"/></linearGradient></defs><path d="M10 3h5l-4 18c-1 3-2 4-5 4-2 0-3-2-4-5L3 9c0-3 3-6 7-6z" fill="url(#cp1)"/><path d="M13 3h5c3 0 5 2 6 6l2 10c0 3-2 6-6 6h-9c2-1 3-3 4-6z" fill="url(#cp2)"/></svg></span>
    <span class="task pin"><svg viewBox="0 0 28 28"><path d="M14 2a12 12 0 0 0-10.500 18L2 26l6.500-1.600A12 12 0 1 0 14 2z" fill="#1d1d1d" stroke="#25d366" stroke-width="2"/><path d="M9 8c-2 3 0 7 3 10s6 3 8 1l-3-3-2 1c-2-1-3-2-4-4l1-2-3-3z" fill="#25d366"/></svg><b class="task-badge">3</b></span>
    <span class="task pin"><svg><use href="#edge"/></svg></span>
    <span class="task pin"><svg viewBox="0 0 28 28"><circle cx="14" cy="14" r="12.500" fill="#1ed760"/><path d="M7 10c5-1.500 10-1 15 1.500M8 14c4-1 8-.6 12 1.300M9 18c3-.7 6-.4 9 1" fill="none" stroke="#111" stroke-width="2" stroke-linecap="round"/></svg></span>
    <span class="task pin"><svg><use href="#chrome"/></svg></span>
    <span class="task pin"><svg viewBox="0 0 28 28"><path d="M14 1l11 6v13l-11 7L3 20V7z" fill="#183a6c"/><path d="M14 3l8 4.500-8 4.500-8-4.500z" fill="#e9eff7"/><path d="M5 9.500l8 4.500v10l-8-5z" fill="#8fb0d8"/><path d="M23 9.500L15 14v10l8-5z" fill="#fff"/></svg></span>
    <span class="task pin"><svg viewBox="0 0 28 28"><rect x="2" y="2" width="24" height="24" fill="#343434"/><path d="M26 2C16 4 14 20 2 22v4h8C20 22 18 10 26 8z" fill="#f5a13a"/><rect x="2" y="1" width="11" height="9" fill="#eee"/><text x="7.500" y="8.500" text-anchor="middle" class="svgt" font-size="8" fill="#111">64</text><circle cx="12" cy="13" r="3.500" fill="#e0402a"/></svg></span>
    <span class="task act"><svg viewBox="0 0 28 28"><rect width="28" height="28" rx="5" fill="#000"/><path d="M5 20v-5M9 20v-7M13 20V7M17 20V9M21 20v-7M24 20v-4" stroke="#f2f2f2" stroke-width="2.200" stroke-linecap="round"/></svg></span>
  </div>
  <svg class="tchev" viewBox="0 0 12 8"><path d="M1 7l5-5 5 5" fill="none" stroke="#eee" stroke-width="1.500"/></svg>
</footer>
</body>
</html>
```
FILE: styles.css
```css
* { box-sizing: border-box; }
html, body { margin: 0; padding: 0; }
body { width: 1420px; height: 883px; overflow: hidden; background: #111; font-family: "Noto Sans", "Open Sans", sans-serif; color: #3d3d3d; }
svg { display: block; }
.defs { width: 0; height: 0; position: absolute; }
.svgt { font-family: "Noto Sans", sans-serif; }

.titlebar { height: 27px; background: #f3f3f3; display: flex; align-items: center; justify-content: space-between; padding: 0 32px 2px 0; }
.titletext { font: 12px "Open Sans", sans-serif; letter-spacing: -.36px; color: #6f6f6f; }
.minbtn { width: 11px; height: 1px; background: #777; margin-bottom: 6px; }

.vbmenu { height: 18px; background: #3a3a3c; display: flex; gap: 13.500px; align-items: center; font: 10.500px "Open Sans", sans-serif; color: #f2f2f2; letter-spacing: -.3px; padding-bottom: 2px; }

.vm { height: 780px; background: #3b3c3e; display: flex; flex-direction: column; }
.guestrow { height: 757px; display: flex; padding-left: 70px; }
.guest { width: 1280px; display: flex; flex-direction: column; }

.lo { height: 724px; background: #f5f4f2; display: flex; flex-direction: column; }
.lomenu { height: 9px; overflow: hidden; border-bottom: 1px solid #dcdbd9; margin-right: 44px; display: flex; font-size: 14px; line-height: 14px; color: #333; padding-left: 8px; }
.lomenu span { margin-top: -11px; flex: none; }
.m1 { width: 55px; } .m2 { width: 72px; } .m3 { width: 75px; } .m4 { width: 44px; } .m5 { width: 52px; } .m6 { width: 48px; } .m7 { width: 110px; } .m8 { width: 65px; } .m9 { width: 72px; }

.tb { height: 39px; display: flex; align-items: center; flex: none; padding-bottom: 1px; }
.tb1 { padding-left: 3px; }
.tb2 { padding-left: 4px; }
.b { width: 33px; height: 33px; flex: none; display: flex; align-items: center; justify-content: center; border-radius: 4px; }
.b svg { width: 24px; height: 24px; }
.b svg.w26 { width: 26px; }
.b.on { background: #d4d0cb; }
.bview { width: 39px; }
.bnote { width: 40px; }
.balign { margin-left: -2px; }
.bfilter { width: 26px; }
.a { width: 11px; flex: none; display: flex; justify-content: center; }
.a::before { content: ""; border-left: 4px solid transparent; border-right: 4px solid transparent; border-top: 4px solid #1a1a1a; }
.a.d::before { border-top-color: #b5b5b5; }
.amr { margin-right: 2px; }
.aml { margin-left: 5px; }
.s { flex: none; height: 33px; display: flex; justify-content: center; }
.s::before { content: ""; width: 1px; background: #d9d8d5; }
.s7 { width: 7px; } .s8 { width: 8px; } .s9 { width: 9px; } .s10 { width: 10px; } .s11 { width: 11px; }
.more { width: 12px; height: 10px; margin-left: 34px; flex: none; }

.work { height: 613px; display: flex; flex: none; }
.slides { width: 197px; position: relative; padding-left: 2px; padding-right: 7px; border-right: 1px solid transparent; display: flex; flex-direction: column; flex: none; }
.slides::after { content: ""; position: absolute; right: 1px; top: 1px; bottom: 0; width: 1px; background: #bcbbb9; }
.slides-head { height: 37px; display: flex; align-items: center; justify-content: space-between; padding: 1px 1px 0 2px; border-bottom: 1px solid #bcbbb9; font-size: 15px; font-weight: 500; letter-spacing: .6px; color: #444; }
.slides-x { width: 9px; height: 9px; margin-top: -5px; }
.slides-list { height: 572px; background: #fff; margin-left: 1px; padding: 8px; }
.slide-item { width: 170px; height: 89px; border: 1px solid #5f87b5; background: linear-gradient(#8ab4e4, #a8d0fa); display: flex; padding: 3px 2px 0 0; }
.slide-no { width: 24px; text-align: right; padding-right: 7px; font-size: 14px; font-weight: 700; line-height: 18px; color: #3c3c3c; }
.slide-thumb { width: 141px; height: 81px; background: #fff; border: 1px solid #777; box-shadow: 1px 1px 2px rgba(0,0,0,.4); }
.grip { position: absolute; top: 270px; width: 7px; height: 73px; background: #8c8c8c; display: flex; align-items: center; justify-content: center; z-index: 2; }
.grip-l { right: -5px; }
.grip-r { left: -9px; }
.gl { border-top: 3px solid transparent; border-bottom: 3px solid transparent; border-right: 4px solid #eee; }
.gr { border-top: 3px solid transparent; border-bottom: 3px solid transparent; border-left: 4px solid #eee; }

.center { width: 674px; display: flex; flex-direction: column; flex: none; margin-right: 9px; }
.canvas-row { height: 599px; display: flex; }
.canvas { width: 660px; background: #f5f4f2; padding: 119px 0 0 15px; }
.slide { width: 625px; height: 352px; background: #fff; border: 1px solid #8a8a8a; box-shadow: 1px 1px 0 #bbb; padding: 13px 30px 0; display: flex; flex-direction: column; gap: 9px; font-family: "Liberation Sans", Arial, sans-serif; color: #111; }
.ph { border: 1px dashed #b9b9b9; width: 563px; display: flex; align-items: center; justify-content: center; }
.ph-title { height: 59px; font-size: 34.650px; }
.ph-body { height: 205px; font-size: 25.200px; }
.vscroll { width: 14px; background: #cbcbcb; padding: 51px 3px 0; }
.vthumb { height: 504px; background: #8f8f8f; border-radius: 4px; }
.hscroll-row { height: 14px; padding-left: 6px; }
.hscroll { height: 14px; background: #c9c9c9; padding: 3px 0 0 218px; }
.hthumb { width: 222px; height: 8px; background: #848484; border-radius: 4px; }

.side { width: 394px; position: relative; display: flex; flex: none; }
.deck { width: 350px; position: relative; flex: none; }
.deck-head { height: 29px; display: flex; align-items: center; padding: 0 6px 2px 1px; font-size: 15px; }
.deck-dots { width: 3px; height: 13px; background: radial-gradient(circle, #333 1.300px, transparent 1.500px) 0 0 / 3px 4.500px; }
.deck-title { margin-left: 7px; font-weight: 500; letter-spacing: .8px; color: #444; flex: 1; }
.deck-q { font-size: 14px; color: #555; margin-right: 2px; }
.deck-x { font-weight: 700; font-size: 18px; line-height: 18px; color: #333; }
.sec-head { height: 21px; width: 349px; background: #e6e5e3; display: flex; align-items: center; padding: 0 0 2px 3px; font-size: 15px; font-weight: 500; letter-spacing: .9px; color: #444; position: relative; }
.sec-caret { width: 0; border-left: 5px solid transparent; border-right: 5px solid transparent; border-top: 5px solid #333; margin-right: 4px; }
.sec-more { width: 10px; height: 10px; position: absolute; right: 11px; top: 6px; }
.form { display: grid; grid-template-columns: 101px 199px; column-gap: 6px; padding-top: 6px; align-items: center; font-size: 14px; color: #4a4a4a; }
.form label { text-align: right; line-height: 32px; padding-bottom: 5px; }
.sel-box, .btn { height: 34px; margin-bottom: 3px; border: 1px solid #cbc7c0; border-radius: 5px; background: linear-gradient(#f9f8f6, #efeeec); box-shadow: 0 1px 1px rgba(0,0,0,.08); display: flex; align-items: center; padding: 0 11px 2px; position: relative; }
.sel-box i { position: absolute; right: 12px; top: 15px; border-left: 5px solid transparent; border-right: 5px solid transparent; border-top: 5px solid #333; }
.btn { justify-content: center; }
.chk { height: 26px; display: flex; align-items: center; gap: 4px; padding: 0 0 3px 4px; }
.chk i { width: 16px; height: 16px; background: #3b86e0; border-radius: 3px; flex: none; }
.sec-2 { margin-top: 4px; }
.layouts { display: grid; grid-template-columns: repeat(4, 61px); grid-auto-rows: 47px; column-gap: 26px; row-gap: 19px; padding: 9px 0 0 13px; }
.layouts svg { width: 61px; height: 47px; background: #fafafa; border: 1.500px solid #333; overflow: visible; }
.layouts rect { fill: none; stroke: #777; }
.layouts .bl { stroke: #2088d0; stroke-width: 2.600; fill: none; }
.layouts .bl3 { stroke-width: 3; }
.pick { position: relative; display: block; }
.pick::after { content: ""; position: absolute; left: -14px; right: -13px; top: -9px; bottom: -8px; border: 3px solid #3584e4; }
.deck-scroll { position: absolute; left: 346px; top: 31px; width: 3px; height: 569px; background: #bbb; }
.tabs { width: 44px; display: flex; flex-direction: column; align-items: center; flex: none; }
.tabs-dots { width: 4px; height: 17px; margin-top: 12px; background: radial-gradient(circle, #333 1.700px, transparent 2px) 0 0 / 4px 6.500px; margin-bottom: 18px; }
.t { width: 36px; height: 34px; border-radius: 5px; display: flex; align-items: center; justify-content: center; margin-bottom: 8px; flex: none; }
.t svg { width: 22px; height: 22px; }
.t.on { background: #d4d0cb; }

.status { height: 24px; border-top: 1px solid #b5b5b5; background: #f5f4f2; display: flex; align-items: center; font-size: 12px; letter-spacing: -.2px; color: #444; flex: none; padding-top: 1px; }
.c { height: 18px; display: flex; align-items: center; border-right: 1px solid #dcdbd9; flex: none; }
.c1 { width: 64px; padding-left: 10px; }
.c2 { width: 337px; }
.c3 { width: 209px; padding-left: 9px; }
.c4 { width: 211px; padding-left: 11px; gap: 5px; }
.c4 svg { width: 16px; height: 14px; }
.c4 .ml { margin-left: 18px; }
.c5 { width: 28px; padding-left: 10px; }
.c5 svg { width: 14px; height: 16px; }
.c6 { width: 28px; }
.c7 { width: 192px; justify-content: center; letter-spacing: 0; }
.c8 { width: 20px; justify-content: center; }
.c8 svg { width: 13px; height: 13px; }
.c9 { width: 145px; padding-left: 10px; }
.z-m { width: 10px; height: 2px; background: #333; }
.z-p { width: 10px; height: 10px; margin-left: 5px; background: linear-gradient(#333, #333) center / 10px 2px no-repeat, linear-gradient(#333, #333) center / 2px 10px no-repeat; }
.z-track { width: 100px; height: 2px; margin-left: 2px; background: #999; position: relative; display: block; }
.z-tick { position: absolute; left: 49px; top: -2px; width: 2px; height: 6px; background: #999; }
.z-knob { position: absolute; left: 28px; top: -5px; width: 4px; height: 12px; background: #eee; border: 1px solid #444; }
.c10 { width: 47px; justify-content: center; border: 0; padding-right: 2px; letter-spacing: 0; }

.cin { height: 33px; background: #222; display: flex; align-items: center; padding-left: 8px; font-size: 14.500px; color: #b9c1c9; flex: none; }
.cin-menu { width: 51px; color: #cfd6dd; margin-top: -2px; letter-spacing: -.3px; }
.ball { width: 20px; height: 20px; border-radius: 50%; flex: none; }
.ball.red { background: linear-gradient(#fff, #fff) 12px 4px / 6px 1px no-repeat, #ec4f49; }
.ball-s { width: 20px; height: 20px; flex: none; }
.ball-t { margin-left: 12px; }
.ball-g { margin-left: 10px; }
.chev { width: 8px; height: 6px; margin: 0 7px; flex: none; }
.pill { width: 196px; height: 27px; background: #3c3c3c; border-radius: 14px; display: flex; align-items: center; padding-left: 7px; color: #bdbdbd; flex: none; white-space: nowrap; }
.pill-i { width: 14px; height: 14px; margin-right: 18px; }
.pill-t { margin-top: -2px; }
.darkdot { width: 14px; height: 14px; border-radius: 50%; background: #0c0c0c; border: 1px solid #3a3a3a; margin-left: 11px; flex: none; }
.cin-win { margin: -2px 0 0 18px; color: #9aa0a6; white-space: nowrap; }
.cin-right { margin-left: auto; display: flex; align-items: center; padding-right: 20px; height: 33px; color: #d8d8d8; }
.ws { width: 25px; height: 33px; background: #161616; display: block; margin-right: 17px; }
.ws i { display: block; width: 25px; height: 16px; background: #666; border: 1px solid #ddd; }
.mon { width: 14px; height: 12px; margin-right: 17px; }
.bat { width: 14px; height: 22px; margin-right: 11px; }
.batt { margin: -2px 14px 0 0; font-size: 15px; }
.vpn { width: 20px; height: 21px; margin-right: 15px; }
.bell { width: 14px; height: 16px; margin-right: 17px; }
.spk { width: 14px; height: 14px; margin-right: 20px; }
.clock { font-size: 12px; letter-spacing: .3px; }

.vmscroll { width: 14px; height: 757px; display: flex; flex-direction: column; background: #38393b; border-left: 1px solid #2e2e2e; flex: none; }
.vs-btn { height: 13px; background: #4a4b4d; color: #aaa; font-size: 7px; line-height: 13px; text-align: center; flex: none; }
.vs-top { height: 40px; background: #3a3b3d; flex: none; }
.vs-thumb { flex: 1; background: #4b4c4e; border-top: 1px solid #555; }

.vbstatus { height: 23px; display: flex; align-items: center; justify-content: flex-end; gap: 3px; overflow: hidden; }
.vbstatus svg { width: 16px; height: 16px; flex: none; }
.rig { font: 11px "Open Sans", sans-serif; color: #ddd; width: 9px; overflow: hidden; flex: none; }

.strip { height: 10px; background: #0c0c0c; }
.taskbar { height: 48px; background: #1c1c1c; border-top: 1px solid #414141; display: flex; align-items: center; padding-left: 18px; position: relative; }
.weather { width: 435px; display: flex; align-items: center; position: relative; flex: none; }
.w-ic { width: 26px; height: 26px; margin-top: -4px; }
.w-badge { position: absolute; left: 14px; top: -2px; width: 16px; height: 16px; border-radius: 50%; background: #ee7b80; color: #222; font-size: 11px; line-height: 16px; text-align: center; }
.w-txt { margin: -2px 0 0 7px; display: flex; flex-direction: column; font-size: 11.300px; line-height: 16px; color: #dcdcdc; }
.w-txt b { font-weight: 600; color: #eee; font-size: 11px; }
.winlogo { width: 24px; height: 24px; flex: none; margin-top: -1px; }
.search { width: 225px; height: 36px; margin-left: 13px; background: #3a3a3a; border-radius: 18px; display: flex; align-items: center; padding-left: 12px; gap: 13px; font-size: 13px; color: #cfcfcf; position: relative; flex: none; margin-top: -2px; }
.search svg { width: 15px; height: 15px; flex: none; }
.search .s-art { width: 48px; height: 24px; position: absolute; right: 6px; top: 5px; }
.tasks { display: flex; flex: none; height: 47px; }
.task { width: 44.400px; display: flex; align-items: center; justify-content: center; position: relative; flex: none; padding-bottom: 2px; }
.task svg { width: 24px; height: 24px; }
.task.pin::after { content: ""; position: absolute; bottom: 3px; left: 19px; width: 6px; height: 3px; border-radius: 2px; background: #8a8a8a; }
.task.act { background: #2b2b2b; border-radius: 4px; height: 40px; margin-top: 3px; width: 40px; margin-left: 2px; padding: 0; }
.task.act::after { content: ""; position: absolute; bottom: 1px; left: 12px; width: 16px; height: 3px; border-radius: 2px; background: #aaa; }
.task-badge { position: absolute; top: 6px; right: 5px; width: 15px; height: 15px; border-radius: 50%; background: #777; color: #111; font-size: 10px; line-height: 15px; text-align: center; }
.tchev { width: 12px; height: 8px; margin-left: auto; margin-right: 21px; }
```
